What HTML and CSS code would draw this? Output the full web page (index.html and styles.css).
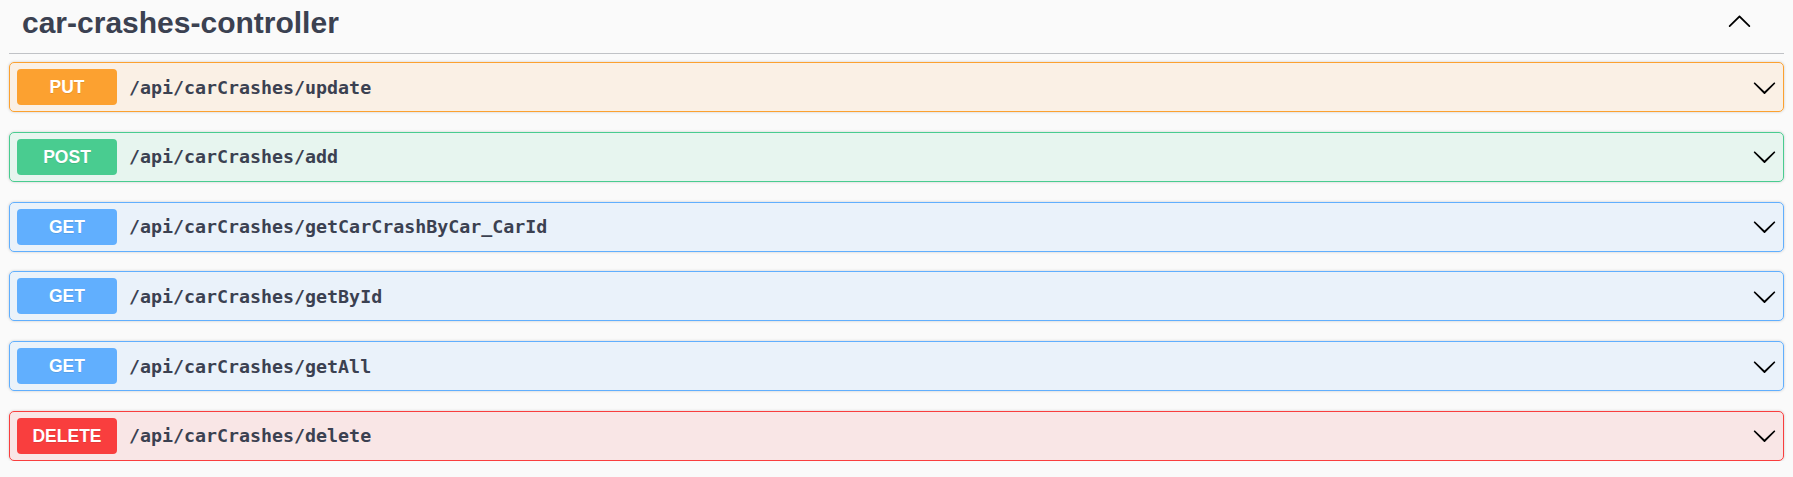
FILE: index.html
```html
<!DOCTYPE html>
<html lang="en">
<head>
<meta charset="utf-8">
<title>car-crashes-controller</title>
<link rel="stylesheet" href="styles.css">
</head>
<body>
<div class="section">
  <div class="tag-header">
    <h3 class="tag-title">car-crashes-controller</h3>
    <svg class="arrow arrow-up" viewBox="0 0 20 20" width="25" height="25"><path d="M17.418 14.908c.272.268.709.268.979 0s.271-.701 0-.969l-7.908-7.83c-.27-.268-.707-.268-.979 0l-7.908 7.83c-.27.268-.27.701 0 .969.271.268.709.268.979 0L10 7.767l7.418 7.141z"/></svg>
  </div>
  <div class="ops">
    <div class="op op-put">
      <span class="method">PUT</span>
      <span class="path">/api/carCrashes/update</span>
      <svg class="arrow" viewBox="0 0 20 20" width="25" height="25"><path d="M17.418 6.109c.272-.268.709-.268.979 0s.271.701 0 .969l-7.908 7.83c-.27.268-.707.268-.979 0l-7.908-7.83c-.27-.268-.27-.701 0-.969.271-.268.709-.268.979 0L10 13.25l7.418-7.141z"/></svg>
    </div>
    <div class="op op-post">
      <span class="method">POST</span>
      <span class="path">/api/carCrashes/add</span>
      <svg class="arrow" viewBox="0 0 20 20" width="25" height="25"><path d="M17.418 6.109c.272-.268.709-.268.979 0s.271.701 0 .969l-7.908 7.83c-.27.268-.707.268-.979 0l-7.908-7.83c-.27-.268-.27-.701 0-.969.271-.268.709-.268.979 0L10 13.25l7.418-7.141z"/></svg>
    </div>
    <div class="op op-get">
      <span class="method">GET</span>
      <span class="path">/api/carCrashes/getCarCrashByCar_CarId</span>
      <svg class="arrow" viewBox="0 0 20 20" width="25" height="25"><path d="M17.418 6.109c.272-.268.709-.268.979 0s.271.701 0 .969l-7.908 7.83c-.27.268-.707.268-.979 0l-7.908-7.83c-.27-.268-.27-.701 0-.969.271-.268.709-.268.979 0L10 13.25l7.418-7.141z"/></svg>
    </div>
    <div class="op op-get">
      <span class="method">GET</span>
      <span class="path">/api/carCrashes/getById</span>
      <svg class="arrow" viewBox="0 0 20 20" width="25" height="25"><path d="M17.418 6.109c.272-.268.709-.268.979 0s.271.701 0 .969l-7.908 7.83c-.27.268-.707.268-.979 0l-7.908-7.83c-.27-.268-.27-.701 0-.969.271-.268.709-.268.979 0L10 13.25l7.418-7.141z"/></svg>
    </div>
    <div class="op op-get">
      <span class="method">GET</span>
      <span class="path">/api/carCrashes/getAll</span>
      <svg class="arrow" viewBox="0 0 20 20" width="25" height="25"><path d="M17.418 6.109c.272-.268.709-.268.979 0s.271.701 0 .969l-7.908 7.83c-.27.268-.707.268-.979 0l-7.908-7.83c-.27-.268-.27-.701 0-.969.271-.268.709-.268.979 0L10 13.25l7.418-7.141z"/></svg>
    </div>
    <div class="op op-delete">
      <span class="method">DELETE</span>
      <span class="path">/api/carCrashes/delete</span>
      <svg class="arrow" viewBox="0 0 20 20" width="25" height="25"><path d="M17.418 6.109c.272-.268.709-.268.979 0s.271.701 0 .969l-7.908 7.83c-.27.268-.707.268-.979 0l-7.908-7.83c-.27-.268-.27-.701 0-.969.271-.268.709-.268.979 0L10 13.25l7.418-7.141z"/></svg>
    </div>
  </div>
</div>
</body>
</html>
```

FILE: styles.css
```css
html, body {
  margin: 0;
  padding: 0;
  background: #fafafa;
}

.section {
  padding: 0 9px;
  font-family: "Liberation Sans", Arial, sans-serif;
  color: #3b4151;
}

.tag-header {
  display: flex;
  align-items: flex-start;
  justify-content: space-between;
  height: 54px;
  box-sizing: border-box;
  padding: 0 32px 0 13px;
  border-bottom: 1px solid rgba(59, 65, 81, 0.3);
  margin-bottom: 8px;
}

.tag-title {
  margin: 0;
  padding-top: 7.5px;
  font-size: 30px;
  font-weight: 700;
  line-height: 30px;
  color: #3b4151;
}

.arrow {
  display: block;
  flex: none;
  fill: #000;
}

.arrow-up {
  margin-top: 8px;
}

.ops {
  display: flex;
  flex-direction: column;
  gap: 19.75px;
}

.op {
  display: flex;
  align-items: center;
  height: 50px;
  box-sizing: border-box;
  padding: 0 6px 0 7px;
  border: 1px solid;
  border-radius: 5px;
  box-shadow: 0 0 3px rgba(0, 0, 0, 0.19);
}

.method {
  flex: none;
  width: 100px;
  height: 36px;
  line-height: 36px;
  border-radius: 4px;
  text-align: center;
  color: #fff;
  font-size: 17.5px;
  font-weight: 700;
  text-shadow: 0 1px 0 rgba(0, 0, 0, 0.1);
}

.path {
  flex: 1;
  margin-left: 12px;
  font-family: "DejaVu Sans Mono", "Liberation Mono", monospace;
  font-size: 18.3px;
  font-weight: 700;
  color: #3b4151;
}

.op-put { background: rgba(252, 161, 48, 0.1); border-color: #fca130; }
.op-put .method { background: #fca130; }

.op-post { background: rgba(73, 204, 144, 0.1); border-color: #49cc90; }
.op-post .method { background: #49cc90; }

.op-get { background: rgba(97, 175, 254, 0.1); border-color: #61affe; }
.op-get .method { background: #61affe; }

.op-delete { background: rgba(249, 62, 62, 0.1); border-color: #f93e3e; }
.op-delete .method { background: #f93e3e; }
```
